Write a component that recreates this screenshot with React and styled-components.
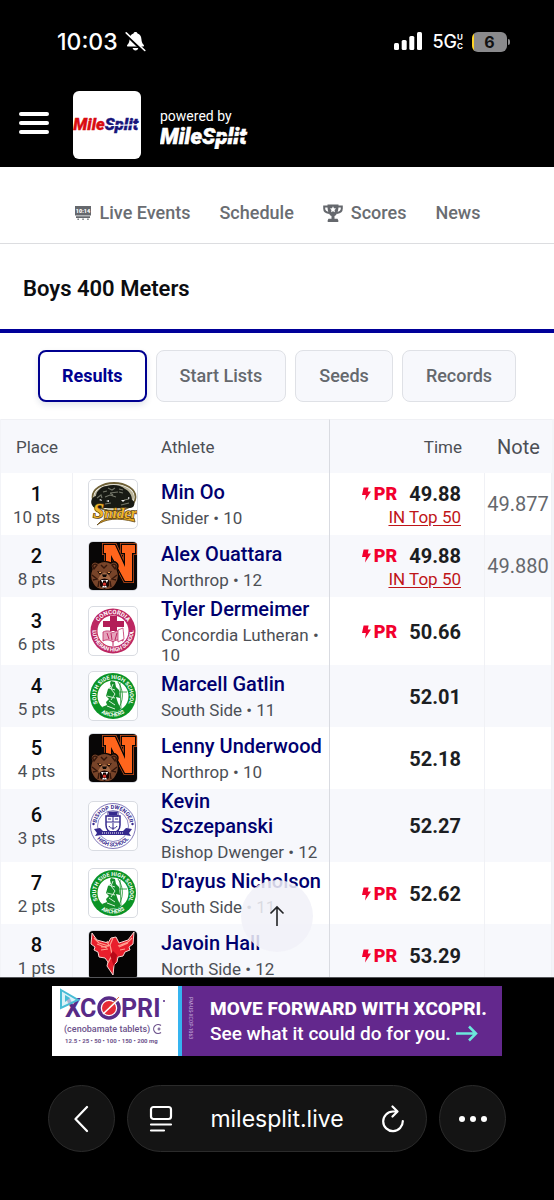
import React from "react";
import styled, { createGlobalStyle } from "styled-components";

const GlobalStyle = createGlobalStyle`
  *, *::before, *::after { box-sizing: border-box; }
  body { margin: 0; background: #000; font-family: Roboto, "Liberation Sans", sans-serif; }
  button { font-family: inherit; cursor: pointer; }
`;

const Screen = styled.div`
  display: flex;
  flex-direction: column;
  height: 100vh;
  overflow: hidden;
  background: #000;
`;

/* ---------- status bar ---------- */
const StatusBar = styled.div`
  display: flex;
  align-items: center;
  justify-content: space-between;
  height: 83px;
  padding: 0 44px 0 57px;
  color: #fff;
  font-family: Inter, sans-serif;
  flex: none;
`;
const StatusGroup = styled.div`
  display: flex;
  align-items: center;
  gap: ${(p) => p.$gap}px;
`;
const Clock = styled.span`
  font-size: 23px;
  line-height: 28px;
  font-weight: 500;
`;
const Network = styled.span`
  display: flex;
  align-items: center;
  font-size: 18px;
  font-weight: 500;
  line-height: 20px;
`;
const NetworkSuffix = styled.span`
  display: flex;
  flex-direction: column;
  font-size: 8px;
  font-weight: 700;
  line-height: 9px;
`;
const Battery = styled.span`
  display: flex;
  align-items: center;
`;
const BatteryBody = styled.span`
  width: 35px;
  height: 20px;
  border-radius: 6px;
  background: linear-gradient(90deg, #ffd426 2px, #8a8a8c 2px);
  color: #111;
  font-size: 16px;
  font-weight: 700;
  line-height: 20px;
  text-align: center;
`;
const BatteryTip = styled.span`
  width: 2px;
  height: 6px;
  margin-left: 1px;
  border-radius: 0 2px 2px 0;
  background: #8a8a8c;
`;

/* ---------- site header ---------- */
const Header = styled.header`
  display: flex;
  align-items: center;
  height: 84px;
  padding: 0 19px;
  flex: none;
`;
const MenuButton = styled.button`
  display: flex;
  flex-direction: column;
  gap: 5px;
  width: 30px;
  margin-right: 24px;
  padding: 0 0 5px;
  border: 0;
  background: none;
`;
const MenuLine = styled.span`
  height: 4px;
  border-radius: 2px;
  background: #fff;
`;
const LogoTile = styled.a`
  display: flex;
  align-items: center;
  justify-content: center;
  width: 68px;
  height: 68px;
  margin-right: 19px;
  border-radius: 6px;
  background: #fff;
  text-decoration: none;
`;
const PoweredBy = styled.div`
  display: flex;
  flex-direction: column;
  padding-top: 6px;
  color: #fff;
  font-size: 14px;
  line-height: 18px;
`;

/* ---------- site navigation ---------- */
const SiteNav = styled.nav`
  display: flex;
  align-items: center;
  justify-content: center;
  gap: 29px;
  height: 77px;
  padding-top: 16px;
  background: #fff;
  border-bottom: 1px solid #dcdde0;
  flex: none;
`;
const NavLink = styled.a`
  display: flex;
  align-items: center;
  gap: 8px;
  color: #6a6d72;
  font-size: 18px;
  font-weight: 500;
  line-height: 24px;
  text-decoration: none;
`;
const TitleBar = styled.div`
  display: flex;
  align-items: center;
  height: 89px;
  padding: 5px 23px 0;
  background: #fff;
  border-bottom: 4px solid #000099;
  flex: none;
`;
const Title = styled.h1`
  margin: 0;
  color: #0c0d10;
  font-size: 22px;
  font-weight: 600;
  line-height: 28px;
`;
const Tabs = styled.div`
  display: flex;
  justify-content: center;
  gap: 9px;
  padding: 17px 16px;
  background: #fff;
  flex: none;
`;
const Tab = styled.button`
  height: 52px;
  padding: 0 ${(p) => (p.$active ? 22 : 23)}px;
  border-radius: 8px;
  border: ${(p) => (p.$active ? "2px solid #000090" : "1px solid #dfe1e6")};
  background: ${(p) => (p.$active ? "#fff" : "#f7f8fc")};
  box-shadow: ${(p) => (p.$active ? "0 3px 6px rgba(20, 40, 90, 0.12)" : "none")};
  color: ${(p) => (p.$active ? "#000090" : "#65686d")};
  font-size: 18px;
  font-weight: ${(p) => (p.$active ? 700 : 500)};
  line-height: 24px;
`;

/* ---------- results table ---------- */
const Results = styled.main`
  position: relative;
  flex: 1;
  min-height: 0;
  overflow: hidden;
  background: #fff;
`;
const Table = styled.table`
  width: 100%;
  table-layout: fixed;
  border-collapse: separate;
  border-spacing: 0;
  border-left: 1px solid #f3f4f8;
  border-right: 2px solid #f3f4f8;
`;
const Col = styled.col`
  width: ${(p) => p.$width};
`;
const HeadCell = styled.th`
  height: 54px;
  padding: ${(p) => p.$padding || "0"};
  background: #f7f8fc;
  border-top: 1px solid #eff0f4;
  border-right: ${(p) => (p.$divider ? "1px solid #d9dbe1" : "0")};
  color: #4c4f55;
  font-size: ${(p) => p.$size || 17}px;
  font-weight: 400;
  text-align: ${(p) => p.$align || "center"};
`;
const Row = styled.tr`
  background: #fff;
  &:nth-child(even) { background: #f7f8fc; }
`;
const Cell = styled.td`
  height: 62px;
  padding: ${(p) => p.$padding || "0"};
  border-right: 1px solid ${(p) => p.$line || "#f0f1f5"};
  vertical-align: middle;
  text-align: ${(p) => p.$align || "center"};
`;
const Place = styled.div`
  color: #0b0c0e;
  font-size: 20px;
  font-weight: 500;
  line-height: 24px;
`;
const Points = styled.div`
  color: #4c4f55;
  font-size: 17px;
  line-height: 22px;
`;
const Athlete = styled.div`
  display: flex;
  align-items: center;
  gap: 23px;
`;
const Crest = styled.svg`
  display: block;
  flex: none;
  width: 50px;
  height: 50px;
  border: 1px solid #d9dce2;
  border-radius: 5px;
  background: #fff;
`;
const AthleteText = styled.div`
  min-width: 0;
`;
const Name = styled.a`
  display: block;
  margin-bottom: 3px;
  color: #00006e;
  font-size: 20px;
  font-weight: 500;
  line-height: 25px;
  text-decoration: none;
`;
const School = styled.div`
  color: #4c4f55;
  font-size: 17px;
  line-height: 20px;
`;
const TimeLine = styled.div`
  display: flex;
  align-items: center;
  justify-content: flex-end;
  gap: 12px;
  color: #1c1e22;
  font-size: 20px;
  font-weight: 700;
  line-height: 24px;
`;
const Record = styled.span`
  display: flex;
  align-items: center;
  gap: 3px;
  color: #f2002e;
  font-size: 18px;
  font-weight: 900;
`;
const RankLink = styled.a`
  display: block;
  color: #bf1518;
  font-size: 17px;
  line-height: 22px;
  text-underline-offset: 2px;
`;
const Note = styled.span`
  color: #65686d;
  font-size: 20px;
`;
const TopButton = styled.button`
  position: absolute;
  left: 50%;
  bottom: 25px;
  display: flex;
  align-items: center;
  justify-content: center;
  width: 72px;
  height: 72px;
  margin-left: -36px;
  border: 0;
  border-radius: 50%;
  background: rgba(241, 241, 248, 0.86);
`;

/* ---------- advert ---------- */
const AdStrip = styled.aside`
  display: flex;
  justify-content: center;
  padding: 8px 0 29px;
  border-top: 1px solid #55565a;
  background: #000;
  flex: none;
`;
const Ad = styled.a`
  display: flex;
  width: 450px;
  height: 70px;
  background: #63288d;
  text-decoration: none;
`;
const AdBrand = styled.div`
  flex: none;
  width: 130px;
  border-right: 4px solid #35b4f0;
  background: #fff;
`;
const AdCode = styled.div`
  flex: none;
  width: 28px;
  padding: 11px 15px 0 0;
  color: #cdb5df;
  font-size: 5px;
  line-height: 8px;
  writing-mode: vertical-rl;
`;
const AdCopy = styled.div`
  display: flex;
  flex-direction: column;
  justify-content: center;
  color: #fff;
  white-space: nowrap;
`;
const AdHeadline = styled.strong`
  font-size: 19px;
  font-weight: 800;
  line-height: 25px;
`;
const AdLine = styled.span`
  display: flex;
  align-items: center;
  gap: 5px;
  font-size: 19px;
  font-weight: 500;
  line-height: 25px;
`;

/* ---------- browser bar ---------- */
const BrowserBar = styled.footer`
  display: flex;
  gap: 12px;
  padding: 0 48px 48px;
  background: #000;
  flex: none;
`;
const RoundButton = styled.button`
  display: flex;
  align-items: center;
  justify-content: center;
  width: 67px;
  height: 67px;
  padding: 0;
  border: 1px solid #2b2b2b;
  border-radius: 50%;
  background: #141414;
`;
const AddressPill = styled.div`
  display: flex;
  flex: 1;
  align-items: center;
  justify-content: space-between;
  height: 67px;
  padding: 0 20px;
  border: 1px solid #2b2b2b;
  border-radius: 34px;
  background: #141414;
`;
const IconButton = styled.button`
  display: flex;
  padding: 0;
  border: 0;
  background: none;
`;
const Address = styled.span`
  color: #fff;
  font-family: Inter, sans-serif;
  font-size: 23px;
  line-height: 28px;
`;

/* ---------- drawings ---------- */
const BellOff = () => (
  <svg width="21" height="21" viewBox="0 0 21 21" aria-hidden="true">
    <path d="M10.500 1c-1.200 0-1.900.7-2 1.600C6 3.400 4.800 5.300 4.600 8c-.2 3.300-.9 4.400-2.200 5.700-.8.900-.4 1.900.8 1.900h14.600c1.200 0 1.600-1 .8-1.900-1.300-1.300-2-2.400-2.200-5.700-.2-2.700-1.400-4.600-3.900-5.400C12.400 1.700 11.700 1 10.500 1z" fill="#fff" />
    <path d="M7.600 17h5.800c-.4 1.600-1.500 2.500-2.900 2.500S8 18.600 7.600 17z" fill="#fff" />
    <path d="M.5 3 18.500 20.500" stroke="#000" strokeWidth="2.500" />
    <path d="M1.200 1.800 19.800 19.500" stroke="#fff" strokeWidth="1.600" strokeLinecap="round" />
  </svg>
);

const Signal = () => (
  <svg width="29" height="19" viewBox="0 0 29 19" fill="#fff" aria-hidden="true">
    <rect x="0" y="11" width="5" height="7" rx="1.500" />
    <rect x="7.700" y="8" width="5" height="10" rx="1.500" />
    <rect x="15.300" y="4" width="5" height="14" rx="1.500" />
    <rect x="23" y="0" width="5" height="18" rx="1.500" />
  </svg>
);

const Wordmark = ({ width, height, left, right, cut }) => (
  <svg width={width} height={height} viewBox="0 0 90 24" role="img" aria-label="MileSplit">
    <text x="0" y="19" fontFamily="Roboto, sans-serif" fontSize="22" fontWeight="900" fontStyle="italic" strokeWidth=".5">
      <tspan fill={left} stroke={left}>Mile</tspan>
      <tspan fill={right} stroke={right}>Split</tspan>
    </text>
    <path d="M43 13 88 11.500" stroke={cut} strokeWidth="1.400" />
  </svg>
);

const ScoreboardIcon = () => (
  <svg width="18" height="16" viewBox="0 0 18 16" aria-hidden="true">
    <path fill="#65686d" d="M1 1h16v9.500H1zM2 11.200h14V13H2zM3.500 13.500h1.300V15H3.500zm4.900 0h1.300V15H8.400zm4.900 0h1.300V15h-1.300z" />
    <text x="9" y="7.800" textAnchor="middle" fill="#fff" fontFamily="Roboto, sans-serif" fontWeight="900" fontSize="5.500">10:14</text>
  </svg>
);

const TrophyIcon = () => (
  <svg width="20" height="19" viewBox="0 0 20 19" fill="none" aria-hidden="true">
    <path d="M5 2.500H1.200v2C1.200 7.300 3.500 8.600 6 9M15 2.500h3.800v2c0 2.800-2.300 4.100-4.800 4.500" stroke="#65686d" strokeWidth="2" />
    <path d="M4.500.5h11c.2 5.600-1 10.300-4 11.500v2.800h2.500c.8 0 1 .6 1 1.200h.3V18H4.700v-2H5c0-.6.200-1.200 1-1.200h2.500V12c-3-1.200-4.200-5.900-4-11.500z" fill="#65686d" />
    <path d="m10 2.300.95 1.950 2.150.3-1.550 1.500.35 2.150L10 7.200 8.100 8.200l.35-2.150L6.900 4.550l2.150-.3z" fill="#fff" />
  </svg>
);

const Bolt = () => (
  <svg width="9" height="14" viewBox="0 0 9 14" aria-hidden="true">
    <path d="M1.600.4h5L5.800 4.500H9L3 13.600l.9-5.600H0z" fill="#f2002e" />
  </svg>
);

const SniderCrest = () => (
  <Crest viewBox="0 0 48 48" role="img" aria-label="Snider">
    <ellipse cx="25" cy="17" rx="21.500" ry="14" fill="#fff" stroke="#6f6136" strokeWidth="1.800" />
    <ellipse cx="25" cy="17" rx="20" ry="12.500" fill="#b9b49a" />
    <path d="M3 25c-2-4 0-8 4-9 0-5 6-10 11-10 6-2 14-1 18 3 4 2 7 6 7 11 3 1 3 5 1 7-3 2-6 0-9 1H13c-4 1-8 1-10-3z" fill="#181a14" />
    <path d="m8 18 4-3 1 3m6-10 4 2 3-2m4 4 4 1m-18 4 5-2 6 2m8 3 5-1m-24 5 6-1m10 2 8-2m-19-10 3 2M14 12l4-1m12-2 4 1m-13 3 8-1" stroke="#74776a" strokeWidth="1.100" fill="none" />
    <path d="m10 20 2-1 1 2zm22 0h4l-2 2zm7-3 2 1-2 1zM17 21l3-1v2z" fill="#eee" />
    <path d="M8 45c8-6 20-8 38-3l-1-4c-14-3-25-1-33 3z" fill="#e8aa22" stroke="#604618" strokeWidth=".8" />
    <text x="4" y="38" fontFamily="Liberation Serif, serif" fontWeight="700" fontStyle="italic" fontSize="15" fill="#f0b62a" stroke="#5b4216" strokeWidth="1.400" paintOrder="stroke"><tspan fontSize="20">S</tspan>nider</text>
  </Crest>
);

const NorthropCrest = () => {
  const letter = "M15 3h11l10 22V11h-3V3h13v8h-3v28h-7L22 13v20h-7v-6h2V11h-2z";
  return (
    <Crest viewBox="0 0 48 48" role="img" aria-label="Northrop">
      <path d="M0 0h48v48H0z" fill="#080606" />
      <path d={letter} fill="none" stroke="#c84e18" strokeWidth="4" />
      <path d={letter} fill="#ff651c" stroke="#080606" strokeWidth="2.500" paintOrder="stroke" />
      <path d="M3 27c-3-5 2-9 6-6 4-2 9-2 13 0 4-3 9 1 6 6 2 5 2 11-1 15-2 4-6 6-11 6S6 46 4 42c-3-4-3-10-1-15z" fill="#784429" stroke="#0b0503" strokeWidth="1.400" />
      <path d="M4 25c-1-2 2-4 4-2l-3 4zm19-2c2-2 5 0 4 2l-1 2zM3 33l5 4-4 1m5 7 1-6m18-6-5 4 4 1m-5 7-1-6M12 23l3 3 3-3" fill="none" stroke="#35170c" strokeWidth="1.400" />
      <path d="m8 29 6 2-3 2zm15 0-6 2 3 2z" fill="#180904" />
      <path d="M10 30.500h2m7 0h2" stroke="#e39a56" />
      <path d="m12 32 3.500-1.500L19 32l3 5-3 2h-7l-3-2z" fill="#a36a47" />
      <path d="M13 32.500h5l-1 2.500h-3z" fill="#0c0706" />
      <path d="M11 38c3-2 6-2 9 0v6l-4.500 3L11 44z" fill="#160504" />
      <path d="m12 38 1.500 3 .8-2.500h2.600l.8 2.500 1.500-3M13 45.500l1-2 1.500 1 1.500-1 1 2z" fill="#fff" />
      <path d="M14 41.500c1-1.500 2-1.500 3 0v2h-3z" fill="#d8342c" />
    </Crest>
  );
};

const SealText = ({ id, top, bottom, color, size, radius, bottomSize }) => {
  const outer = radius + 3.500;
  return (
    <>
      <defs>
        <path id={`${id}-t`} d={`M24 ${24 + radius}a${radius} ${radius} 0 0 1 0 ${-2 * radius}a${radius} ${radius} 0 0 1 0 ${2 * radius}`} />
        <path id={`${id}-b`} d={`M24 ${24 - outer}a${outer} ${outer} 0 0 0 0 ${2 * outer}a${outer} ${outer} 0 0 0 0 ${-2 * outer}`} />
      </defs>
      <g fill={color} fontFamily="Roboto, sans-serif" fontWeight="700" textAnchor="middle">
        <text fontSize={size}><textPath href={`#${id}-t`} startOffset="50%">{top}</textPath></text>
        <text fontSize={bottomSize || size}><textPath href={`#${id}-b`} startOffset="50%">{bottom}</textPath></text>
      </g>
    </>
  );
};

const ConcordiaCrest = ({ id }) => (
  <Crest viewBox="0 0 48 48" role="img" aria-label="Concordia Lutheran">
    <circle cx="24" cy="24" r="22.500" fill="#bd2762" />
    <circle cx="24" cy="24" r="15.500" fill="#fff" />
    <path d="M21 9h7v5h7v6h-7v4h-7v-4h-7v-6h7z" fill="#b31e58" />
    <path d="M14 25c4-2 8-1 10 1 2-2 7-3 10-1v9c-4-2-8-1-10 1-3-2-6-3-10-1z" fill="#e6a3bb" stroke="#bd2762" strokeWidth=".8" />
    <path d="m18 26 2 6m2-6 1 7m5-7-2 7M24 34v5" stroke="#bd2762" />
    <path d="m29 23 5-2 1 11-6 3z" fill="#fff" stroke="#bd2762" strokeWidth=".7" />
    <SealText id={id} top="CONCORDIA" bottom="LUTHERAN HIGH SCHOOL" color="#fff" size="6" bottomSize="5.500" radius={17} />
  </Crest>
);

const SouthSideCrest = ({ id }) => (
  <Crest viewBox="0 0 48 48" role="img" aria-label="South Side">
    <circle cx="24" cy="24" r="23" fill="#0b9426" />
    <circle cx="24" cy="24" r="15.500" fill="#fff" />
    <path d="m22 9 4 1 1 5 3 3 1 8-4-1 2 6 3 6-3 2H16l-3-4 5-2-1-3 3-3-3-3 2-7 3-2-1-4z" fill="#168f2c" />
    <path d="m20 16 6 2m-8 6 8 2m-6 3 6 4m-8 1 8 3M24 12l-2 5 4 5-4 6" fill="none" stroke="#d6efd9" strokeWidth="1" />
    <path d="M29 10c6 8 6 20-1 28M27 20h11M31 11l1 26" fill="none" stroke="#168f2c" strokeWidth=".8" />
    <SealText id={id} top="SOUTH SIDE HIGH SCHOOL" bottom="ARCHERS" color="#fff" size="5.500" radius={17} />
  </Crest>
);

const DwengerCrest = ({ id }) => (
  <Crest viewBox="0 0 48 48" role="img" aria-label="Bishop Dwenger">
    <circle cx="24" cy="24" r="22.500" fill="#fff" stroke="#4a3e9b" strokeWidth=".7" />
    <circle cx="24" cy="24" r="15.500" fill="none" stroke="#4a3e9b" strokeWidth=".6" />
    <path d="M17 14h14v9c0 5-3 7-7 8-4-1-7-3-7-8z" fill="#fff" stroke="#35298d" strokeWidth="1.500" />
    <path d="M17 20h14M24 14v6M19 10h10v4H19zM19 17h3m4 0h3m-5 4v7m-4-4c1 3 7 3 8 0" stroke="#35298d" fill="none" />
    <path d="M20 10h8v3h-8z" fill="#35298d" />
    <path d="m5 27 6-1 3 3h20l3-3 6 1-3 4 2 3-6-1H12l-6 1 2-3z" fill="#35298d" />
    <path d="M13 31h22" stroke="#fff" strokeWidth="1.200" strokeDasharray="1 1" />
    <circle cx="4.500" cy="22" r="1.200" fill="#35298d" />
    <circle cx="43.500" cy="22" r="1.200" fill="#35298d" />
    <SealText id={id} top="BISHOP DWENGER" bottom="HIGH SCHOOL" color="#35298d" size="5.500" radius={17} />
  </Crest>
);

const NorthSideCrest = () => (
  <Crest viewBox="0 0 48 48" role="img" aria-label="North Side">
    <path d="M0 0h48v48H0z" fill="#050404" />
    <path d="m3 2 5 7 11 3 3-5 5-1 3 6 9-3 6-8-1 12-4 3 1 3-5 2-2 4-5 1-1 5-3 3-1 10-6-9 1-4-3-4-6-1-1-5-4-2 1-3-4-3z" fill="#e91f2c" stroke="#f8d6d3" strokeWidth="1" />
    <path d="m5 7 5 5 10 3-8 1m-4-3 10 4m-6 2 7-1m10-3 10-4 4-4m-13 9 9-4m-8 7 5-1m-12-11-3 7 2 9m-5-13 2 5m-1 17 3-6 3 4" fill="none" stroke="#ff9d8e" strokeWidth="1.200" />
    <path d="m21 24 3-4 4 4-3 12z" fill="#b90918" />
  </Crest>
);

const XcopriLogo = () => (
  <svg width="126" height="70" viewBox="0 0 126 70" role="img" aria-label="Xcopri">
    <g fill="#582b87" fontFamily="Roboto, sans-serif" fontWeight="700" fontSize="25">
      <text x="13" y="31">X</text>
      <text x="28" y="31">C</text>
      <text x="69" y="31">PRI</text>
    </g>
    <path d="m9 4 17 10L9 22z" fill="#c9edf4" fillOpacity=".7" stroke="#48bcd5" strokeWidth="2" />
    <path d="m13 9 5 3-5 4z" fill="#48bcd5" />
    <circle cx="57" cy="22" r="10" fill="#fff" stroke="#582b87" strokeWidth="3.500" />
    <circle cx="57" cy="22" r="7" fill="#e52a37" />
    <path d="M51 28 68 12" stroke="#fff" strokeWidth="1.600" />
    <path d="m57 21 10-10" stroke="#e5794c" strokeWidth="1" />
    <circle cx="112" cy="15" r="1" fill="#582b87" />
    <text x="12" y="46" fill="#6d538c" fontFamily="Roboto, sans-serif" fontWeight="500" fontSize="9">(cenobamate tablets)</text>
    <path d="M109 39.500a4.500 4.500 0 1 0 0 7m-2-5v3m-1.500-1.500h3" fill="none" stroke="#6d538c" strokeWidth="1.200" />
    <text x="13" y="57" fill="#6d538c" fontFamily="Roboto, sans-serif" fontWeight="700" fontSize="6">12.5 • 25 • 50 • 100 • 150 • 200 mg</text>
  </svg>
);

const crests = {
  Snider: SniderCrest,
  Northrop: NorthropCrest,
  "Concordia Lutheran": ConcordiaCrest,
  "South Side": SouthSideCrest,
  "Bishop Dwenger": DwengerCrest,
  "North Side": NorthSideCrest,
};

const results = [
  { place: 1, pts: 10, name: "Min Oo", school: "Snider", grade: 10, time: "49.88", pr: true, rank: "IN Top 50", note: "49.877" },
  { place: 2, pts: 8, name: "Alex Ouattara", school: "Northrop", grade: 12, time: "49.88", pr: true, rank: "IN Top 50", note: "49.880" },
  { place: 3, pts: 6, name: "Tyler Dermeimer", school: "Concordia Lutheran", grade: 10, time: "50.66", pr: true },
  { place: 4, pts: 5, name: "Marcell Gatlin", school: "South Side", grade: 11, time: "52.01" },
  { place: 5, pts: 4, name: "Lenny Underwood", school: "Northrop", grade: 10, time: "52.18" },
  { place: 6, pts: 3, name: "Kevin Szczepanski", school: "Bishop Dwenger", grade: 12, time: "52.27" },
  { place: 7, pts: 2, name: "D'rayus Nicholson", school: "South Side", grade: 11, time: "52.62", pr: true },
  { place: 8, pts: 1, name: "Javoin Hall", school: "North Side", grade: 12, time: "53.29", pr: true },
];

const ResultRow = ({ r }) => {
  const SchoolCrest = crests[r.school];
  return (
    <Row>
      <Cell $padding="1px 0 0">
        <Place>{r.place}</Place>
        <Points>{r.pts} pts</Points>
      </Cell>
      <Cell $padding="0 4px 0 15px" $align="left" $line="#d9dbe1">
        <Athlete>
          <SchoolCrest id={`crest-${r.place}`} />
          <AthleteText>
            <Name href="#athlete">{r.name}</Name>
            <School>{r.school} • {r.grade}</School>
          </AthleteText>
        </Athlete>
      </Cell>
      <Cell $padding="1px 23px 0 0" $align="right">
        <TimeLine>
          {r.pr && <Record><Bolt />PR</Record>}
          {r.time}
        </TimeLine>
        {r.rank && <RankLink href="#rankings">{r.rank}</RankLink>}
      </Cell>
      <Cell><Note>{r.note}</Note></Cell>
    </Row>
  );
};

export default function App() {
  return (
    <Screen>
      <GlobalStyle />
      <StatusBar>
        <StatusGroup $gap={7}>
          <Clock>10:03</Clock>
          <BellOff />
        </StatusGroup>
        <StatusGroup $gap={9}>
          <Signal />
          <Network>5G<NetworkSuffix><span>U</span><span>C</span></NetworkSuffix></Network>
          <Battery><BatteryBody>6</BatteryBody><BatteryTip /></Battery>
        </StatusGroup>
      </StatusBar>

      <Header>
        <MenuButton aria-label="Menu"><MenuLine /><MenuLine /><MenuLine /></MenuButton>
        <LogoTile href="#home"><Wordmark width={68} height={18} left="#d90d12" right="#17147a" cut="#fff" /></LogoTile>
        <PoweredBy>
          powered by
          <Wordmark width={90} height={24} left="#fff" right="#fff" cut="#000" />
        </PoweredBy>
      </Header>

      <SiteNav>
        <NavLink href="#live"><ScoreboardIcon />Live Events</NavLink>
        <NavLink href="#schedule">Schedule</NavLink>
        <NavLink href="#scores"><TrophyIcon />Scores</NavLink>
        <NavLink href="#news">News</NavLink>
      </SiteNav>

      <TitleBar><Title>Boys 400 Meters</Title></TitleBar>

      <Tabs>
        <Tab $active>Results</Tab>
        <Tab>Start Lists</Tab>
        <Tab>Seeds</Tab>
        <Tab>Records</Tab>
      </Tabs>

      <Results>
        <Table>
          <colgroup>
            <Col $width="72px" />
            <Col $width="auto" />
            <Col $width="155px" />
            <Col $width="67px" />
          </colgroup>
          <thead>
            <tr>
              <HeadCell>Place</HeadCell>
              <HeadCell $align="left" $padding="0 0 0 88px" $divider>Athlete</HeadCell>
              <HeadCell $align="right" $padding="0 23px 0 0">Time</HeadCell>
              <HeadCell $size={20}>Note</HeadCell>
            </tr>
          </thead>
          <tbody>
            {results.map((r) => <ResultRow key={r.place} r={r} />)}
          </tbody>
        </Table>
        <TopButton aria-label="Back to top">
          <svg width="16" height="22" viewBox="0 0 16 22" fill="none" stroke="#222326" strokeWidth="1.600" aria-hidden="true">
            <path d="M8 21V2M1.500 8.500 8 2l6.500 6.500" />
          </svg>
        </TopButton>
      </Results>

      <AdStrip>
        <Ad href="#ad">
          <AdBrand><XcopriLogo /></AdBrand>
          <AdCode>PM-US-XCOP-1063</AdCode>
          <AdCopy>
            <AdHeadline>MOVE FORWARD WITH XCOPRI.</AdHeadline>
            <AdLine>
              See what it could do for you.
              <svg width="22" height="17" viewBox="0 0 22 17" fill="none" stroke="#6ce8dc" strokeWidth="2.500" aria-hidden="true">
                <path d="M0 8.500h20M13 1.500l7 7-7 7" />
              </svg>
            </AdLine>
          </AdCopy>
        </Ad>
      </AdStrip>

      <BrowserBar>
        <RoundButton aria-label="Back">
          <svg width="16" height="28" viewBox="0 0 16 28" fill="none" stroke="#fff" strokeWidth="2.200" strokeLinecap="round" strokeLinejoin="round" aria-hidden="true">
            <path d="M13 2 1.500 14 13 26" />
          </svg>
        </RoundButton>
        <AddressPill>
          <IconButton aria-label="Page menu">
            <svg width="26" height="28" viewBox="0 0 26 28" fill="none" stroke="#fff" strokeWidth="2.200" strokeLinecap="round" aria-hidden="true">
              <rect x="3" y="2" width="20" height="12" rx="2.500" />
              <path d="M3 19.500h20M3 25.500h13" />
            </svg>
          </IconButton>
          <Address>milesplit.live</Address>
          <IconButton aria-label="Reload">
            <svg width="26" height="28" viewBox="0 0 26 28" fill="none" stroke="#fff" strokeWidth="2.200" strokeLinecap="round" strokeLinejoin="round" aria-hidden="true">
              <path d="M16.500 6.500H13A9.800 9.800 0 1 0 22.800 16M12.500 1.500l5 5-5 5" />
            </svg>
          </IconButton>
        </AddressPill>
        <RoundButton aria-label="More">
          <svg width="30" height="8" viewBox="0 0 30 8" fill="#fff" aria-hidden="true">
            <circle cx="4" cy="4" r="3" /><circle cx="15" cy="4" r="3" /><circle cx="26" cy="4" r="3" />
          </svg>
        </RoundButton>
      </BrowserBar>
    </Screen>
  );
}
